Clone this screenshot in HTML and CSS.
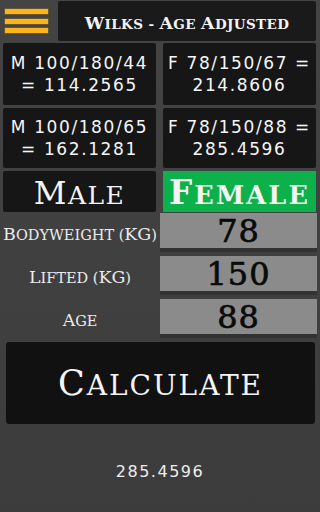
FILE: index.html
```html
<!DOCTYPE html>
<html>
<head>
<meta charset="utf-8">
<link rel="stylesheet" href="styles.css">
</head>
<body>
<div class="app">
  <div class="topbar">
    <div class="menu">
      <span class="bar"></span><span class="bar"></span><span class="bar"></span>
    </div>
    <div class="title"><span class="cap">W</span>ilks - <span class="cap">A</span>ge <span class="cap">A</span>djusted</div>
  </div>
  <div class="grid">
    <div class="card"><span>M 100/180/44</span><span>= 114.2565</span></div>
    <div class="card"><span>F 78/150/67 =</span><span>214.8606</span></div>
    <div class="card"><span>M 100/180/65</span><span>= 162.1281</span></div>
    <div class="card"><span>F 78/150/88 =</span><span>285.4596</span></div>
    <div class="sex male"><span class="cap">M</span>ale</div>
    <div class="sex female"><span class="cap">F</span>emale</div>
  </div>
  <div class="inputs">
    <div class="label"><span class="cap">B</span>odyweight (<span class="cap">KG</span>)</div><div class="field">78</div>
    <div class="label"><span class="cap">L</span>ifted (<span class="cap">KG</span>)</div><div class="field">150</div>
    <div class="label"><span class="cap">A</span>ge</div><div class="field">88</div>
  </div>
  <div class="calc"><span class="cap">C</span>alculate</div>
  <div class="result">285.4596</div>
</div>
</body>
</html>
```
FILE: styles.css
```css
html, body {
  margin: 0;
  padding: 0;
}
body {
  width: 320px;
  height: 512px;
  overflow: hidden;
  background: linear-gradient(#444444, #3c3c3c);
}
.app {
  display: flex;
  flex-direction: column;
  height: 512px;
}
.topbar {
  display: flex;
  height: 40px;
  margin-top: 1px;
}
.menu {
  width: 58px;
  display: flex;
  flex-direction: column;
  justify-content: center;
  gap: 4.5px;
  padding-left: 5px;
  box-sizing: border-box;
}
.bar {
  display: block;
  width: 43px;
  height: 5px;
  background: #fbb419;
  box-shadow: 0 0 0 0.5px #8a6a20;
}
.cap {
  font-size: 1.28em;
}
.title {
  flex: 1;
  margin-right: 4px;
  background: #1a1a1a;
  border-radius: 2px;
  color: #f4f4f4;
  display: flex;
  align-items: baseline;
  justify-content: center;
  padding-top: 12px;
  box-sizing: border-box;
  font-family: "DejaVu Serif", serif;
  font-weight: bold;
  text-transform: uppercase;
  font-size: 13.5px;
  line-height: 20px;
  white-space: pre;
  letter-spacing: 0.4px;
}
.grid {
  display: grid;
  grid-template-columns: 153px 153px;
  grid-template-rows: 62px 60px 41px;
  column-gap: 7px;
  row-gap: 3px;
  padding: 2px 4px 0 3px;
}
.card {
  background: #161616;
  border-radius: 2px;
  color: #f6f6f6;
  display: flex;
  flex-direction: column;
  align-items: center;
  justify-content: center;
  font-family: "DejaVu Sans", sans-serif;
  font-size: 17px;
  line-height: 22px;
  letter-spacing: 1.6px;
  white-space: nowrap;
}
.sex {
  display: flex;
  align-items: baseline;
  justify-content: center;
  padding-top: 5px;
  box-sizing: border-box;
  font-family: "DejaVu Serif", serif;
  text-transform: uppercase;
  font-size: 25px;
  line-height: 34px;
  white-space: pre;
  color: #f4f4f4;
}
.male {
  background: #161616;
  border-radius: 2px;
  letter-spacing: 1.5px;
}
.female {
  background: #0cb14b;
  font-weight: bold;
  font-size: 25.5px;
  letter-spacing: 2.2px;
}
.inputs {
  display: grid;
  grid-template-columns: 160px 157px;
  grid-auto-rows: 39px;
  row-gap: 4px;
  margin-top: 1px;
}
.label {
  display: flex;
  align-items: baseline;
  justify-content: center;
  padding-top: 11px;
  box-sizing: border-box;
  color: #ececec;
  font-family: "DejaVu Serif", serif;
  text-transform: uppercase;
  font-size: 14.5px;
  line-height: 20px;
  white-space: pre;
}
.label .cap {
  font-size: 1.2em;
}
.field {
  background: #8b8b8b;
  border-bottom: 4px solid #323232;
  display: flex;
  align-items: center;
  justify-content: center;
  color: #0a0a0a;
  font-family: "DejaVu Serif", serif;
  font-size: 32px;
  letter-spacing: 1px;
  -webkit-text-stroke: 0.7px #0a0a0a;
}
.calc {
  margin: 4px 5px 0 6px;
  height: 82px;
  background: #111111;
  border-radius: 3px;
  display: flex;
  align-items: baseline;
  justify-content: center;
  padding-top: 24px;
  box-sizing: border-box;
  color: #f4f4f4;
  font-family: "DejaVu Serif", serif;
  text-transform: uppercase;
  font-size: 28px;
  line-height: 34px;
  letter-spacing: 2px;
  white-space: pre;
}
.calc .cap {
  font-size: 1.25em;
}
.result {
  flex: 1;
  display: flex;
  align-items: center;
  justify-content: center;
  padding-top: 6px;
  color: #ededed;
  font-family: "DejaVu Sans", sans-serif;
  font-size: 16px;
  letter-spacing: 1.5px;
}
```
